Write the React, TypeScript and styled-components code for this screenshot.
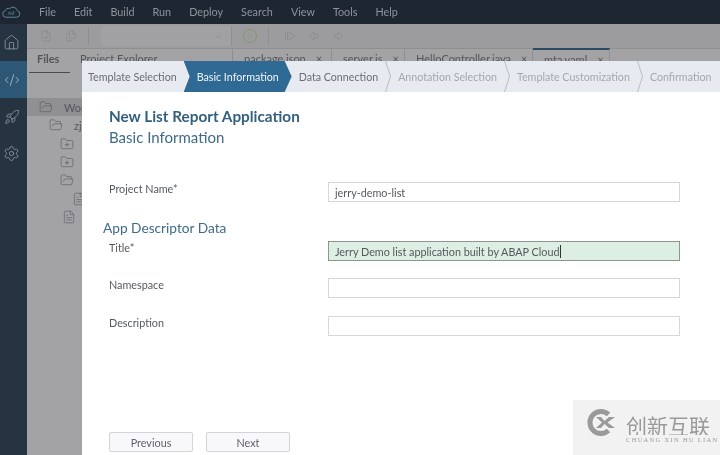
import React from "react"
import styled, { createGlobalStyle } from "styled-components"
import {
  ArrowBigLeft,
  ArrowBigRight,
  ChevronDown,
  CodeXml,
  Files,
  FilePlus,
  FileText,
  FolderOpen,
  FolderPlus,
  House,
  Play,
  Rocket,
  Settings,
  StepForward,
} from "lucide-react"

const GlobalStyle = createGlobalStyle`
  html, body {
    margin: 0;
    padding: 0;
    width: 720px;
    height: 455px;
    overflow: hidden;
    background: #fff;
  }
  * {
    box-sizing: border-box;
  }
`

const menus = ["File", "Edit", "Build", "Run", "Deploy", "Search", "View", "Tools", "Help"]

const steps = [
  { label: "Template Selection", state: "done" },
  { label: "Basic Information", state: "active" },
  { label: "Data Connection", state: "done" },
  { label: "Annotation Selection", state: "todo" },
  { label: "Template Customization", state: "todo" },
  { label: "Confirmation", state: "todo" },
]

const tree = [
  { icon: "open", indent: 12, label: "Workspace", selected: true },
  { icon: "open", indent: 22, label: "zjerry" },
  { icon: "plus", indent: 33 },
  { icon: "plus", indent: 33 },
  { icon: "open", indent: 33 },
  { icon: "file", indent: 45 },
  { icon: "file", indent: 35 },
]

const editorTabs = [
  { label: "package.json", width: 99 },
  { label: "server.js", width: 73 },
  { label: "HelloController.java", width: 128 },
  { label: "mta.yaml", width: 77, active: true },
]

function TreeIcon({ kind }: { kind: string }) {
  if (kind === "plus") return <FolderPlus size={14} strokeWidth={1} />
  if (kind === "file") return <FileText size={14} strokeWidth={1} />
  return <FolderOpen size={14} strokeWidth={1} />
}

function CloudLogo() {
  return (
    <svg width="21" height="14" viewBox="0 0 21 14" fill="none" stroke="#5a8e9c" strokeWidth="1">
      <path d="M5 12.5h11.5a3.5 3.5 0 0 0 .6-6.9A4.8 4.8 0 0 0 9 3.4a3.4 3.4 0 0 0-4.6 2.4A3.4 3.4 0 0 0 5 12.5z" />
      <path d="M7.5 10l1.4-3.2L10.3 10M11.5 7v3M13 7v3M12.4 6.8h1.6" strokeWidth="0.7" />
    </svg>
  )
}

function WatermarkLogo() {
  return (
    <svg width="29" height="27" viewBox="0 0 29 27" fill="none">
      <path d="M21.5 5.5A11 11 0 1 0 21.5 21.5" stroke="#9a9a9a" strokeWidth="5" />
      <path d="M9 8h5l3.500 4 4.500-4h6l-7.500 5.500L28 19h-6l-4.500-4-3.500 4H9l6-5.500z" fill="#9a9a9a" />
    </svg>
  )
}

function StepDivider() {
  return (
    <DividerSvg width="6" height="31" viewBox="0 0 6 31" fill="none" stroke="#b9bcc5" strokeWidth="1">
      <path d="M0.500 0l5 15.500-5 15.500" />
    </DividerSvg>
  )
}

export default function App() {
  return (
    <Page>
      <GlobalStyle />
      <MenuBar>
        <LogoSlot>
          <CloudLogo />
        </LogoSlot>
        {menus.map(m => (
          <MenuItem key={m}>{m}</MenuItem>
        ))}
      </MenuBar>

      <Body>
        <Sidebar>
          <SideItem>
            <House size={17} strokeWidth={1.2} />
          </SideItem>
          <SideItem active>
            <CodeXml size={16} strokeWidth={1.3} />
          </SideItem>
          <SideItem>
            <Rocket size={16} strokeWidth={1.2} />
          </SideItem>
          <SideItem>
            <Settings size={17} strokeWidth={1.2} />
          </SideItem>
        </Sidebar>

        <Workspace>
          <Toolbar>
            <ToolIcon>
              <FilePlus size={12} strokeWidth={1} />
            </ToolIcon>
            <ToolIcon last>
              <Files size={12} strokeWidth={1} />
            </ToolIcon>
            <ToolDivider />
            <ToolSelect>
              <ChevronDown size={11} strokeWidth={1.2} />
            </ToolSelect>
            <RunButton>
              <Play size={6} strokeWidth={1.4} />
            </RunButton>
            <ToolDivider />
            <ToolGroup>
              <StepForward size={12} strokeWidth={1} />
              <ArrowBigLeft size={12} strokeWidth={1} />
              <ArrowBigRight size={12} strokeWidth={1} />
            </ToolGroup>
          </Toolbar>

          <TabRow>
            <PaneTabs>
              <PaneTab active>Files</PaneTab>
              <PaneTab>Project Explorer</PaneTab>
            </PaneTabs>
            {editorTabs.map(t => (
              <EditorTab key={t.label} active={t.active} style={{ width: t.width }}>
                {t.label}
                <TabClose>×</TabClose>
              </EditorTab>
            ))}
          </TabRow>

          <Tree>
            {tree.map((row, i) => (
              <TreeRow key={i} selected={row.selected} indent={row.indent}>
                <TreeIcon kind={row.icon} />
                {row.label && <TreeLabel>{row.label}</TreeLabel>}
              </TreeRow>
            ))}
          </Tree>
        </Workspace>
      </Body>

      <Dialog>
        <StepBar>
          {steps.map((s, i) => (
            <React.Fragment key={s.label}>
              <Step state={s.state}>{s.label}</Step>
              {s.state !== "active" && steps[i + 1]?.state !== "active" && i < steps.length - 1 && <StepDivider />}
            </React.Fragment>
          ))}
        </StepBar>

        <Form>
          <Heading>New List Report Application</Heading>
          <SubHeading>Basic Information</SubHeading>

          <FormRow first>
            <FieldLabel>Project Name*</FieldLabel>
            <Field>jerry-demo-list</Field>
          </FormRow>

          <SectionTitle>App Descriptor Data</SectionTitle>

          <FormRow tight>
            <FieldLabel>Title*</FieldLabel>
            <Field focused>
              Jerry Demo list application built by ABAP Cloud
              <Caret />
            </Field>
          </FormRow>
          <FormRow>
            <FieldLabel>Namespace</FieldLabel>
            <Field />
          </FormRow>
          <FormRow last>
            <FieldLabel>Description</FieldLabel>
            <Field />
          </FormRow>

          <Footer>
            <WizardButton>Previous</WizardButton>
            <WizardButton>Next</WizardButton>
          </Footer>
        </Form>

        <Watermark>
          <WatermarkLogo />
          <WatermarkText>
            <WatermarkName>创新互联</WatermarkName>
            <WatermarkPinyin>CHUANG XIN HU LIAN</WatermarkPinyin>
          </WatermarkText>
        </Watermark>
      </Dialog>
    </Page>
  )
}

const Page = styled.div`
  position: relative;
  width: 720px;
  height: 455px;
  overflow: hidden;
  display: flex;
  flex-direction: column;
  font-family: Lato, "Liberation Sans", sans-serif;
  background: #a3a2a5;
  filter: blur(0.3px);
`

const MenuBar = styled.div`
  height: 24px;
  flex: none;
  display: flex;
  align-items: center;
  gap: 18px;
  background: #1e2632;
  color: #8e949c;
  font-size: 10.800px;
`

const LogoSlot = styled.div`
  width: 21px;
  display: flex;
  padding-left: 1px;
`

const MenuItem = styled.span`
  line-height: 24px;
`

const Body = styled.div`
  flex: 1;
  display: flex;
  min-height: 0;
`

const Sidebar = styled.div`
  width: 27px;
  flex: none;
  background: #263442;
  display: flex;
  flex-direction: column;
`

const SideItem = styled.div<{ active?: boolean }>`
  height: 37px;
  padding-right: 4px;
  display: flex;
  align-items: center;
  justify-content: center;
  color: ${props => (props.active ? "#a9bccb" : "#8f9aa4")};
  background: ${props => (props.active ? "#2c5876" : "transparent")};
`

const Workspace = styled.div`
  flex: 1;
  min-width: 0;
  display: flex;
  flex-direction: column;
  background: #a3a2a5;
`

const Toolbar = styled.div`
  height: 24px;
  flex: none;
  display: flex;
  align-items: center;
  padding-left: 13px;
  background: #9c9c9f;
  color: #7f7f84;
`

const ToolIcon = styled.div<{ last?: boolean }>`
  width: 12px;
  display: flex;
  margin-right: ${props => (props.last ? "11px" : "13px")};
`

const ToolDivider = styled.div`
  width: 1px;
  height: 18px;
  background: #8f8f93;
`

const ToolSelect = styled.div`
  width: 131px;
  height: 20px;
  margin: 0 11px 0 12px;
  padding-right: 7px;
  display: flex;
  align-items: center;
  justify-content: flex-end;
  background: #a1a1a4;
  border-right: 1px solid #8d8d91;
`

const RunButton = styled.div`
  width: 14px;
  height: 14px;
  margin-right: 11px;
  border: 1.500px solid #7f9a6c;
  border-radius: 50%;
  color: #7f9a6c;
  display: flex;
  align-items: center;
  justify-content: center;
`

const ToolGroup = styled.div`
  display: flex;
  gap: 12px;
  margin-left: 15px;
`

const TabRow = styled.div`
  height: 25px;
  flex: none;
  display: flex;
  background: #a3a2a5;
  border-top: 1px solid #8f8f92;
  font-size: 11px;
  color: #55555a;
`

const PaneTabs = styled.div`
  width: 206px;
  flex: none;
  display: flex;
  padding-left: 2px;
  gap: 2px;
  border-right: 1px solid #8f8f92;
`

const PaneTab = styled.div<{ active?: boolean }>`
  height: 24px;
  padding: 3px 8px 0;
  font-weight: ${props => (props.active ? 700 : 400)};
  border-bottom: ${props => (props.active ? "1px solid #4c4c50" : "0")};
  min-width: ${props => (props.active ? "41px" : "0")};
`

const EditorTab = styled.div<{ active?: boolean }>`
  flex: none;
  height: 25px;
  margin-top: ${props => (props.active ? "-1px" : "0")};
  padding: 3px 0 0 11px;
  white-space: nowrap;
  border-right: 1px solid #8f8f92;
  border-top: ${props => (props.active ? "2px solid #2d4a60" : "0")};
`

const TabClose = styled.span`
  margin-left: 10px;
`

const Tree = styled.div`
  padding-top: 25px;
  display: flex;
  flex-direction: column;
`

const TreeRow = styled.div<{ selected?: boolean; indent: number }>`
  height: 18.300px;
  display: flex;
  align-items: center;
  gap: 11px;
  padding-left: ${props => props.indent}px;
  color: #54545a;
  background: ${props => (props.selected ? "#909093" : "transparent")};
`

const TreeLabel = styled.span`
  font-size: 11px;
  white-space: nowrap;
`

const Dialog = styled.div`
  position: absolute;
  left: 82px;
  top: 61px;
  right: 0;
  bottom: 0;
  background: #fff;
  display: flex;
  flex-direction: column;
`

const StepBar = styled.div`
  height: 31px;
  flex: none;
  display: flex;
  align-items: center;
  padding-left: 6px;
  background: #e8eaf1;
  font-size: 10.700px;
  white-space: nowrap;
`

const DividerSvg = styled.svg`
  flex: none;
`

const stepColor: Record<string, string> = { done: "#6a6d74", active: "#f2f5f8", todo: "#a4a7af" }

const Step = styled.div<{ state: string }>`
  flex: none;
  height: 31px;
  line-height: 31px;
  color: ${props => stepColor[props.state]};
  ${props =>
    props.state === "active"
      ? `
    width: 108px;
    padding-left: 13px;
    background: #2e6a93;
    clip-path: polygon(0 0, 101px 0, 100% 50%, 101px 100%, 0 100%, 6px 50%);
  `
      : `
    margin: 0 7px;
    &:first-child { margin-left: 0; }
  `}
`

const Form = styled.div`
  flex: 1;
  display: flex;
  flex-direction: column;
  padding: 14px 40px 3px 27px;
`

const Heading = styled.div`
  font-size: 15.300px;
  line-height: 20px;
  font-weight: 700;
  color: #33607f;
`

const SubHeading = styled.div`
  font-size: 15px;
  line-height: 20px;
  margin-top: 1px;
  color: #3f6b8a;
`

const FormRow = styled.div<{ first?: boolean; tight?: boolean; last?: boolean }>`
  display: grid;
  grid-template-columns: 219px 352px;
  height: 20px;
  margin-top: ${props => (props.first ? "35px" : props.tight ? "5px" : props.last ? "18px" : "17px")};
`

const FieldLabel = styled.div`
  font-size: 10.800px;
  line-height: 14px;
  color: #55585d;
`

const Field = styled.div<{ focused?: boolean }>`
  height: 20px;
  display: flex;
  align-items: center;
  padding-left: 6px;
  font-size: 10.800px;
  color: #55585d;
  white-space: nowrap;
  background: ${props => (props.focused ? "#dcefe2" : "#fff")};
  border: 1px solid ${props => (props.focused ? "#9aa3a0" : "#d5d7da")};
  outline: ${props => (props.focused ? "1px dotted #7e8a86" : "none")};
  outline-offset: -1px;
`

const Caret = styled.span`
  width: 1px;
  height: 13px;
  background: #333;
`

const SectionTitle = styled.div`
  margin: 18px 0 0 -6px;
  font-size: 13.700px;
  line-height: 16px;
  color: #3f6b8a;
`

const Footer = styled.div`
  margin-top: auto;
  display: flex;
  gap: 13px;
`

const WizardButton = styled.button`
  width: 84px;
  height: 20px;
  padding: 0;
  font: inherit;
  font-size: 10.800px;
  color: #5f6267;
  background: #f8f8fa;
  border: 1px solid #d3d5d9;
  border-radius: 2px;
`

const Watermark = styled.div`
  position: absolute;
  left: 491px;
  top: 339px;
  right: 0;
  bottom: 0;
  padding: 9px 0 0 14px;
  display: flex;
  align-items: flex-start;
  gap: 10px;
  background: #f2f2f2;
`

const WatermarkText = styled.div`
  margin-top: 6px;
  display: flex;
  flex-direction: column;
`

const WatermarkName = styled.div`
  height: 20px;
  overflow: hidden;
  font-family: "Noto Sans CJK SC", sans-serif;
  font-size: 21px;
  line-height: 20px;
  color: #9a9a9a;
`

const WatermarkPinyin = styled.div`
  margin-top: 1px;
  font-family: "Liberation Serif", serif;
  font-size: 6.500px;
  line-height: 7px;
  letter-spacing: 1.300px;
  white-space: nowrap;
  color: #9a9a9a;
`
